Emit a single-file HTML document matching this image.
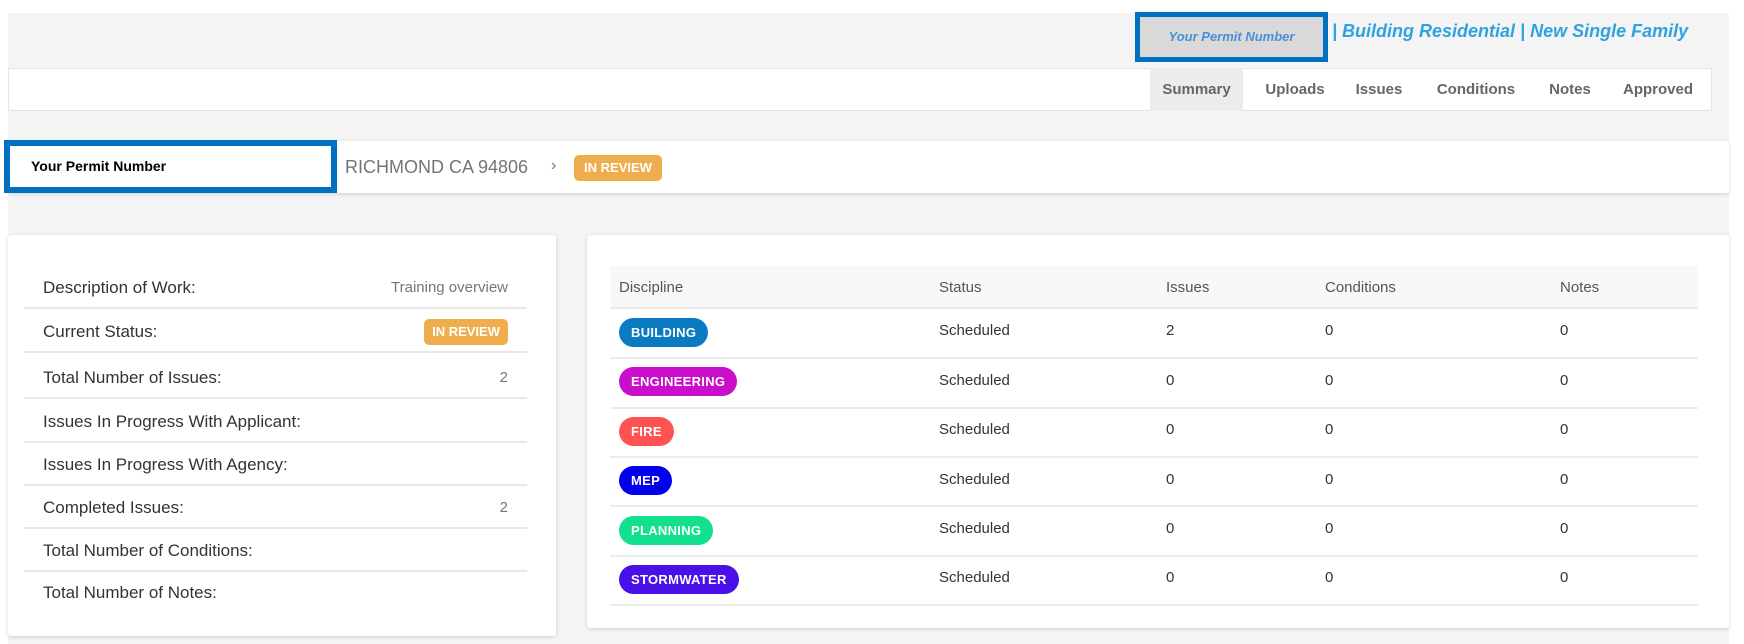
<!DOCTYPE html>
<html><head><meta charset="utf-8"><style>
*{box-sizing:border-box;margin:0;padding:0}
body{width:1744px;height:644px;background:#fff;font-family:"Liberation Sans",sans-serif;position:relative;overflow:hidden;color:#333}
.a{position:absolute}
.bg{left:8px;top:13px;width:1721px;height:631px;background:#f4f4f4}
.card{background:#fff;box-shadow:0 1px 4px rgba(0,0,0,.15);border-radius:3px}
.tab{position:absolute;top:68px;height:43px;line-height:43px;font-weight:bold;font-size:15px;color:#666;text-align:center}
.row{position:absolute;left:24px;width:503px;height:43px;font-size:17px;color:#333;border-bottom:2px solid #e8e8e8}
.row span{position:absolute;left:19px;top:12px}
.row b{position:absolute;right:19px;top:13px;font-weight:normal;font-size:15px;color:#777}
.th{position:absolute;top:279px;font-size:15px;color:#555}
.pill{position:absolute;left:619px;height:29px;line-height:29px;border-radius:15px;color:#fff;font-weight:bold;font-size:13px;padding:0 12px;letter-spacing:.3px}
.line{position:absolute;left:610px;width:1088px;height:2px;background:#ececec}
.c{position:absolute;font-size:15px;color:#333}
</style></head><body>
<div class="a bg"></div>
<div class="a" style="left:1135px;top:12px;width:193px;height:50px;border:5px solid #0070c0;background:#d9d9d9;color:#4a8fd6;font-style:italic;font-weight:bold;font-size:13px;line-height:40px;text-align:center">Your Permit Number</div>
<div class="a" style="left:1332px;top:21px;font-size:18px;font-weight:bold;font-style:italic;color:#2ea3e0">| Building Residential | New Single Family</div>
<div class="a" style="left:8px;top:68px;width:1704px;height:43px;background:#fff;border:1px solid #e4e4e4"></div>
<div class="tab" style="left:1150px;width:93px;background:#ececec">Summary</div>
<div class="tab" style="left:1255px;width:80px">Uploads</div>
<div class="tab" style="left:1346px;width:66px">Issues</div>
<div class="tab" style="left:1425px;width:102px">Conditions</div>
<div class="tab" style="left:1540px;width:60px">Notes</div>
<div class="tab" style="left:1614px;width:88px">Approved</div>
<div class="a card" style="left:8px;top:141px;width:1721px;height:52px"></div>
<div class="a" style="left:4px;top:140px;width:333px;height:53px;border:6px solid #0070c0;background:#fff;font-weight:bold;font-size:14px;line-height:41px;padding-left:21px;color:#000">Your Permit Number</div>
<div class="a" style="left:345px;top:157px;font-size:18px;color:#757575">RICHMOND CA 94806</div>
<div class="a" style="left:551px;top:157px;font-size:16px;color:#777">›</div>
<div class="a" style="left:574px;top:155px;width:88px;height:26px;border-radius:5px;background:#f0ad4e;color:#fff;font-weight:bold;font-size:13px;line-height:26px;text-align:center">IN REVIEW</div>
<div class="a card" style="left:8px;top:235px;width:548px;height:401px"></div>
<div class="row" style="top:266px"><span>Description of Work:</span><b>Training overview</b></div>
<div class="row" style="top:310px"><span>Current Status:</span><b style="top:9px;right:19px;background:#f0ad4e;color:#fff;font-weight:bold;font-size:13px;padding:0 8px;height:26px;line-height:26px;border-radius:5px">IN REVIEW</b></div>
<div class="row" style="top:356px"><span>Total Number of Issues:</span><b>2</b></div>
<div class="row" style="top:400px"><span>Issues In Progress With Applicant:</span></div>
<div class="row" style="top:443px"><span>Issues In Progress With Agency:</span></div>
<div class="row" style="top:486px"><span>Completed Issues:</span><b>2</b></div>
<div class="row" style="top:529px"><span>Total Number of Conditions:</span></div>
<div class="row" style="top:571px;border-bottom:none"><span>Total Number of Notes:</span></div>
<div class="a card" style="left:587px;top:235px;width:1142px;height:393px"></div>
<div class="a" style="left:610px;top:266px;width:1088px;height:42px;background:#f7f8fa"></div>
<div class="th" style="left:619px">Discipline</div>
<div class="th" style="left:939px">Status</div>
<div class="th" style="left:1166px">Issues</div>
<div class="th" style="left:1325px">Conditions</div>
<div class="th" style="left:1560px">Notes</div>
<div class="line" style="top:307px"></div>
<div class="pill" style="top:318px;background:#0a7bc2">BUILDING</div>
<div class="pill" style="top:367px;background:#c90fc9">ENGINEERING</div>
<div class="pill" style="top:417px;background:#ff5252">FIRE</div>
<div class="pill" style="top:466px;background:#0000ee">MEP</div>
<div class="pill" style="top:516px;background:#12e08f">PLANNING</div>
<div class="pill" style="top:565px;background:#4a10e8">STORMWATER</div>
<div class="line" style="top:357px"></div><div class="line" style="top:407px"></div><div class="line" style="top:456px"></div><div class="line" style="top:505px"></div><div class="line" style="top:555px"></div><div class="line" style="top:604px"></div>
<div class="c" style="left:939px;top:322px">Scheduled</div><div class="c" style="left:1166px;top:322px">2</div><div class="c" style="left:1325px;top:322px">0</div><div class="c" style="left:1560px;top:322px">0</div>
<div class="c" style="left:939px;top:372px">Scheduled</div><div class="c" style="left:1166px;top:372px">0</div><div class="c" style="left:1325px;top:372px">0</div><div class="c" style="left:1560px;top:372px">0</div>
<div class="c" style="left:939px;top:421px">Scheduled</div><div class="c" style="left:1166px;top:421px">0</div><div class="c" style="left:1325px;top:421px">0</div><div class="c" style="left:1560px;top:421px">0</div>
<div class="c" style="left:939px;top:471px">Scheduled</div><div class="c" style="left:1166px;top:471px">0</div><div class="c" style="left:1325px;top:471px">0</div><div class="c" style="left:1560px;top:471px">0</div>
<div class="c" style="left:939px;top:520px">Scheduled</div><div class="c" style="left:1166px;top:520px">0</div><div class="c" style="left:1325px;top:520px">0</div><div class="c" style="left:1560px;top:520px">0</div>
<div class="c" style="left:939px;top:569px">Scheduled</div><div class="c" style="left:1166px;top:569px">0</div><div class="c" style="left:1325px;top:569px">0</div><div class="c" style="left:1560px;top:569px">0</div>
</body></html>
